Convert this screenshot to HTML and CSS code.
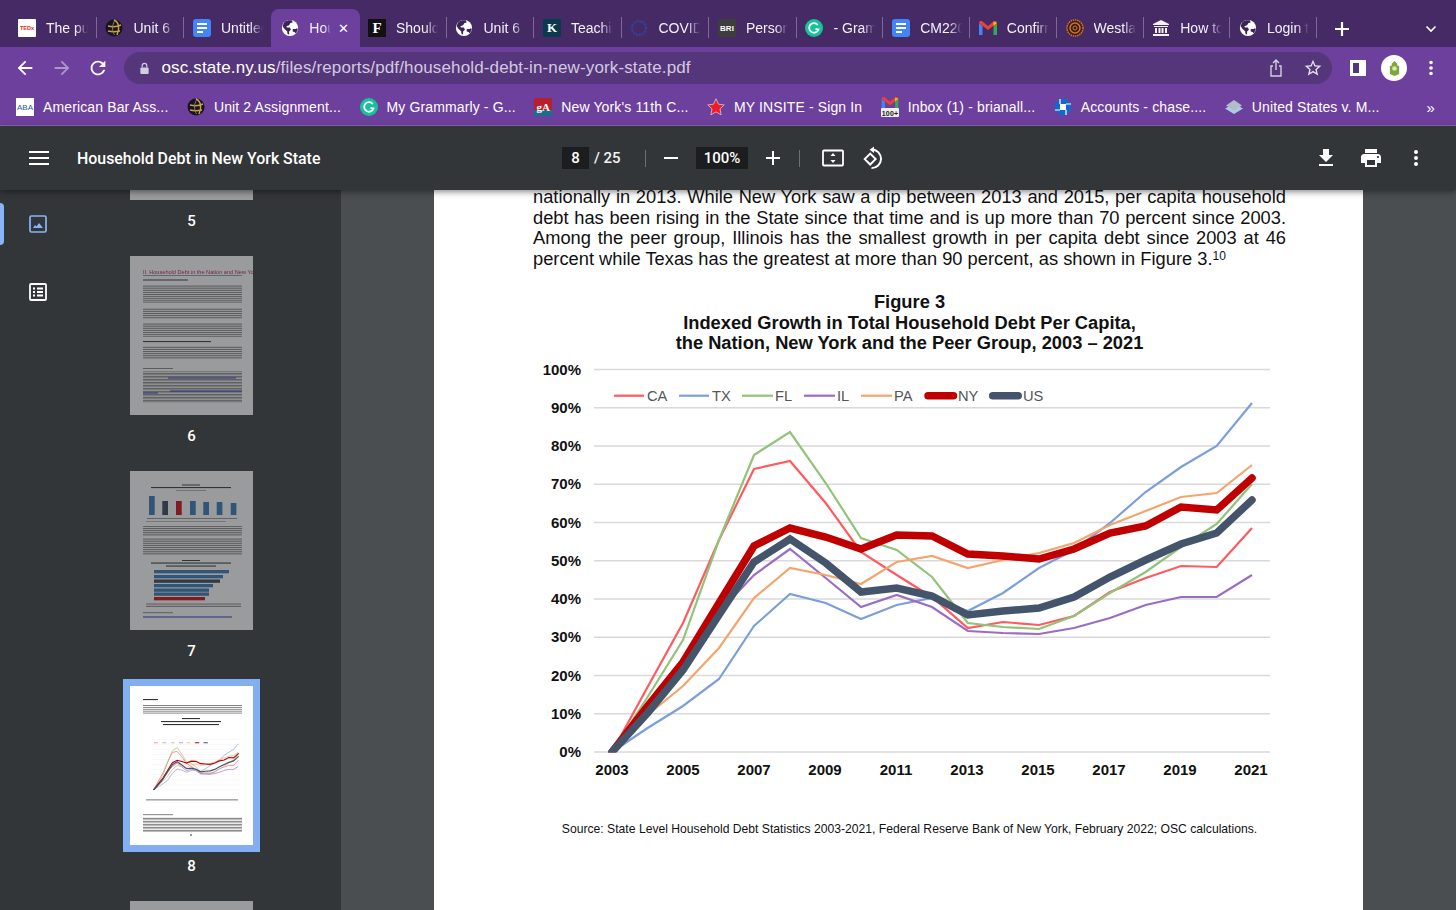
FILE: index.html
```html
<!DOCTYPE html>
<html lang="en">
<head>
<meta charset="utf-8">
<title>Household Debt in New York State</title>
<link rel="stylesheet" href="styles.css">
</head>
<body>
<svg class="defs" aria-hidden="true">
  <defs>
    <pattern id="ln" width="3" height="1.9" patternUnits="userSpaceOnUse"><rect width="3" height=".7" fill="#555"/></pattern>
    <pattern id="lnf" width="4" height="1.5" patternUnits="userSpaceOnUse"><rect width="4" height=".6" fill="#555"/></pattern>
    <clipPath id="plot-clip"><rect x="590" y="360" width="700" height="392.500"/></clipPath>
    <symbol id="globe" viewBox="0 0 20 20"><circle cx="10" cy="10" r="9" fill="#fff"/><path fill="#3d2458" d="M8 1.500 4 3 1.800 7.500 3 10l4 4v2l2 1.500V14l2-2-1-2.500H6.500L6 8l3-1 1.500-2.500L13 4l-1-2.500zM13 11h3.500l1.500-1 .5 2-2 4-1.500-1.500L13 14z"/></symbol>
    <symbol id="docs" viewBox="0 0 18 18"><rect width="18" height="18" rx="3" fill="#4285f4"/><path d="M4 5h10M4 9h10M4 13h6" stroke="#fff" stroke-width="2"/></symbol>
    <symbol id="shield" viewBox="0 0 18 18"><circle cx="9" cy="9" r="8.500" fill="#17131f"/><path d="M9 1c5 2 6 9 3 15M3 7c4 1 9 1 13-1M3 12c4 1 7 1 12 0" stroke="#c9a24a" stroke-width="1.500" fill="none"/><path d="M9.500 2C7 6 7 12 9.500 16" stroke="#8c8062" stroke-width="1" fill="none"/></symbol>
    <symbol id="gram" viewBox="0 0 18 18"><circle cx="9" cy="9" r="9" fill="#15c39a"/><path d="M12.800 6A4.800 4.800 0 1 0 13.500 10.500L10.500 10" fill="none" stroke="#fff" stroke-width="1.800"/></symbol>
    <symbol id="gmail" viewBox="0 0 18 14"><path fill="#4285f4" d="M0 2v12h3.500V5z"/><path fill="#34a853" d="M14.500 5v9H18V2z"/><path fill="#ea4335" d="M0 2 9 9l9-7c0-2-2-2.500-3.500-1.500L9 5 3.500.5C2 -.5 0 0 0 2z"/><path fill="#fbbc04" d="M14.500 .5 18 2l-3.500 3z"/></symbol>
  </defs>
</svg>

<header class="chrome">
  <div class="tabstrip">
    <div class="tab"><span class="fav ted">TEDx</span><span class="tab-title">The public</span></div>
    <div class="tab"><svg class="fav"><use href="#shield"/></svg><span class="tab-title">Unit 6 Test</span></div>
    <div class="tab tab-nosep"><svg class="fav"><use href="#docs"/></svg><span class="tab-title">Untitled</span></div>
    <div class="tab tab-active"><svg class="fav"><use href="#globe"/></svg><span class="tab-title tab-title-short">Household</span><span class="tab-close">✕</span></div>
    <div class="tab"><span class="fav fav-f">F</span><span class="tab-title">Should</span></div>
    <div class="tab"><svg class="fav"><use href="#globe"/></svg><span class="tab-title">Unit 6 Test</span></div>
    <div class="tab"><span class="fav fav-k">K</span><span class="tab-title">Teaching</span></div>
    <div class="tab"><svg class="fav" viewBox="0 0 18 18"><circle cx="9" cy="9" r="7" fill="none" stroke="#3a3f8f" stroke-width="2.500" stroke-dasharray="2 1"/></svg><span class="tab-title">COVID-19</span></div>
    <div class="tab"><span class="fav fav-bri">BRI</span><span class="tab-title">Personal</span></div>
    <div class="tab tab-narrow"><svg class="fav"><use href="#gram"/></svg><span class="tab-title">- Grammarly</span></div>
    <div class="tab tab-narrow"><svg class="fav"><use href="#docs"/></svg><span class="tab-title">CM220</span></div>
    <div class="tab tab-narrow"><svg class="fav" viewBox="0 0 18 14"><use href="#gmail"/></svg><span class="tab-title">Confirm</span></div>
    <div class="tab tab-narrow"><svg class="fav" viewBox="0 0 18 18"><circle cx="9" cy="9" r="8" fill="#3a2016" stroke="#d3702c" stroke-width="1.500" stroke-dasharray="1.500 .7"/><circle cx="9" cy="9" r="5" fill="none" stroke="#d3702c" stroke-width="1.500"/><circle cx="9" cy="9" r="2" fill="none" stroke="#d3702c"/></svg><span class="tab-title">Westlaw</span></div>
    <div class="tab tab-narrow"><svg class="fav" viewBox="0 0 18 18"><path fill="#f2f2f2" d="M9 1 17 5v1H1V5zM2 7h14v1H2zM3 9h2v5H3zM6.500 9h2v5h-2zM9.500 9h2v5h-2zM13 9h2v5h-2zM1 15h16v2H1z"/></svg><span class="tab-title">How to</span></div>
    <div class="tab tab-narrow"><svg class="fav"><use href="#globe"/></svg><span class="tab-title">Login to</span></div>
    <button class="strip-btn strip-plus"><svg viewBox="0 0 16 16"><path d="M8 1v14M1 8h14" stroke="#fff" stroke-width="2.200"/></svg></button>
    <button class="strip-btn strip-chev"><svg viewBox="0 0 12 8"><path d="M1.500 1.500 6 6l4.500-4.500" fill="none" stroke="#fff" stroke-width="1.600"/></svg></button>
  </div>

  <div class="toolbar">
    <button class="tb"><svg viewBox="0 0 24 24"><path fill="#fff" d="M20 11H7.830l5.590-5.590L12 4l-8 8 8 8 1.410-1.410L7.830 13H20v-2z"/></svg></button>
    <button class="tb tb-dim"><svg viewBox="0 0 24 24"><path fill="#fff" d="M4 11h12.170l-5.590-5.590L12 4l8 8-8 8-1.410-1.410L16.170 13H4v-2z"/></svg></button>
    <button class="tb"><svg viewBox="0 0 24 24"><path fill="#fff" d="M17.650 6.350A7.958 7.958 0 0 0 12 4c-4.420 0-7.990 3.580-7.990 8s3.570 8 7.990 8c3.730 0 6.840-2.550 7.730-6h-2.080A5.990 5.990 0 0 1 12 18c-3.310 0-6-2.690-6-6s2.690-6 6-6c1.660 0 3.140.69 4.220 1.780L13 11h7V4l-2.350 2.350z"/></svg></button>
    <div class="omnibox">
      <svg class="lock" viewBox="0 0 12 14"><path d="M3.500 6V4a2.500 2.500 0 0 1 5 0v2" fill="none" stroke="#d5cde2" stroke-width="1.300"/><rect x="1.500" y="6" width="9" height="7" rx="1" fill="#d5cde2"/></svg>
      <span class="url"><b>osc.state.ny.us</b>/files/reports/pdf/household-debt-in-new-york-state.pdf</span>
      <svg class="omni-ic" viewBox="0 0 20 20"><path d="M10 12V2M7 5l3-3 3 3M7 8H5v10h10V8h-2" fill="none" stroke="#d5cde2" stroke-width="1.400"/></svg>
      <svg class="omni-ic" viewBox="0 0 24 24"><path fill="#e6e0ee" d="M22 9.240l-7.190-.62L12 2 9.190 8.630 2 9.240l5.460 4.730L5.820 21 12 17.270 18.180 21l-1.630-7.030L22 9.240zM12 15.400l-3.760 2.270 1-4.280-3.320-2.880 4.380-.38L12 6.100l1.710 4.040 4.380.38-3.320 2.880 1 4.280L12 15.400z"/></svg>
    </div>
    <button class="tb tb-first"><svg viewBox="0 0 18 18"><rect x="1" y="1" width="16" height="16" fill="#fff"/><rect x="4" y="4" width="6" height="10" fill="#55367b"/></svg></button>
    <button class="tb"><span class="avatar"><svg viewBox="0 0 14 18"><path fill="#7fa53d" d="M7 1 10 4v2h2v9l-5 2-5-2V6h2V4z"/><circle cx="7" cy="9" r="2.500" fill="#dce8a8"/></svg></span></button>
    <button class="tb"><svg viewBox="0 0 24 24"><path fill="#fff" d="M12 8a2 2 0 1 0 0-4 2 2 0 0 0 0 4zm0 2a2 2 0 1 0 0 4 2 2 0 0 0 0-4zm0 6a2 2 0 1 0 0 4 2 2 0 0 0 0-4z"/></svg></button>
  </div>

  <nav class="bookmarks">
    <a class="bm"><span class="bm-ic aba">ABA</span>American Bar Ass...</a>
    <a class="bm"><svg class="bm-ic"><use href="#shield"/></svg>Unit 2 Assignment...</a>
    <a class="bm"><svg class="bm-ic"><use href="#gram"/></svg>My Grammarly - G...</a>
    <a class="bm"><span class="bm-ic ga">gA</span>New York's 11th C...</a>
    <a class="bm"><svg class="bm-ic" viewBox="0 0 24 24"><path fill="#ef1c24" stroke="#c9b9d6" stroke-width="1.200" d="M12 1l3.300 7.300 7.700.9-5.700 5.300 1.500 7.900L12 18.500l-6.800 3.900 1.500-7.900L1 9.200l7.700-.9z"/></svg>MY INSITE - Sign In</a>
    <a class="bm"><svg class="bm-ic bm-ic-tall" viewBox="0 0 18 21"><use href="#gmail" width="18" height="13"/><rect y="11" width="18" height="9" rx="1" fill="#eee"/><text x="9" y="18.500" class="t100">100+</text></svg>Inbox (1) - brianall...</a>
    <a class="bm"><svg class="bm-ic" viewBox="0 0 18 18"><path fill="#1169c9" d="M6 1h6l5 5v6l-5 5H6l-5-5V6z"/><path fill="#fff" d="M6 6h6v6H6z"/><path stroke="#fff" stroke-width="1.200" d="M6 6 6 1M12 6h5M12 12v5M6 12H1"/></svg>Accounts - chase....</a>
    <a class="bm"><svg class="bm-ic" viewBox="0 0 18 18"><path fill="#a9cde8" d="M9 6 18 10.500 9 16 0 10.500z"/><path fill="#b3bcc6" d="M9 2 17 7.500 9 12.500 1 7.500z"/></svg>United States v. M...</a>
    <span class="bm-more">»</span>
  </nav>
</header>

<section class="pdfbar">
  <button class="pb pb-menu"><svg viewBox="0 0 20 14"><path d="M0 1h20M0 7h20M0 13h20" stroke="#fff" stroke-width="2"/></svg></button>
  <h1 class="doc-title">Household Debt in New York State</h1>
  <span class="num-box">8</span>
  <span class="pages">/ 25</span>
  <i class="vsep vsep-a"></i>
  <button class="pb pb-minus"><svg viewBox="0 0 16 16"><path d="M1 8h14" stroke="#fff" stroke-width="2"/></svg></button>
  <span class="zoom-box">100%</span>
  <button class="pb pb-plus"><svg viewBox="0 0 16 16"><path d="M1 8h14M8 1v14" stroke="#fff" stroke-width="2"/></svg></button>
  <i class="vsep vsep-b"></i>
  <button class="pb pb-fit"><svg viewBox="0 0 22 18"><rect x="1" y="1.500" width="20" height="15" rx="1" fill="none" stroke="#fff" stroke-width="1.800"/><path fill="#fff" d="M11 4l2.500 3h-5zM11 14l2.500-3h-5z"/></svg></button>
  <button class="pb pb-rot"><svg viewBox="0 0 22 22"><path d="M8 3.500a8.500 8.500 0 1 1 2 17" fill="none" stroke="#fff" stroke-width="1.800" transform="rotate(8 11 11)"/><path fill="#fff" d="M11 .5v6l-4-3z"/><path d="M7.500 7 2.500 12l5 5 5-5z" fill="none" stroke="#fff" stroke-width="1.800"/></svg></button>
  <button class="pb pb-r1"><svg viewBox="0 0 24 24"><path fill="#fff" d="M19 9h-4V3H9v6H5l7 7 7-7zM5 18v2h14v-2H5z"/></svg></button>
  <button class="pb pb-r"><svg viewBox="0 0 24 24"><path fill="#fff" d="M19 8H5c-1.660 0-3 1.340-3 3v6h4v4h12v-4h4v-6c0-1.660-1.340-3-3-3zm-3 11H8v-5h8v5zm3-7c-.55 0-1-.45-1-1s.45-1 1-1 1 .45 1 1-.45 1-1 1zm-1-9H6v4h12V3z"/></svg></button>
  <button class="pb pb-r"><svg viewBox="0 0 24 24"><path fill="#fff" d="M12 8a2 2 0 1 0 0-4 2 2 0 0 0 0 4zm0 2a2 2 0 1 0 0 4 2 2 0 0 0 0-4zm0 6a2 2 0 1 0 0 4 2 2 0 0 0 0-4z"/></svg></button>
</section>

<main class="workspace">
  <aside class="sidebar">
    <div class="rail">
      <button class="rail-btn rail-on"><svg viewBox="0 0 18 18"><rect x="1" y="1" width="16" height="16" rx="1.500" fill="none" stroke="#8ab4f8" stroke-width="1.700"/><path fill="#8ab4f8" d="M4 13l2-3 1.500 1.500L10 8l4 5z"/></svg></button>
      <button class="rail-btn"><svg viewBox="0 0 18 18"><rect x="1" y="1" width="16" height="16" rx="1" fill="none" stroke="#fff" stroke-width="1.800"/><path d="M4 5.500h2M8 5.500h6M4 9h2M8 9h6M4 12.500h2M8 12.500h6" stroke="#fff" stroke-width="1.800"/></svg></button>
    </div>
    <div class="thumbs">
      <figure class="thumb">
        <svg class="thumb-page dim" viewBox="0 0 123 159"><rect width="123" height="159" fill="#fff"/></svg>
        <figcaption>5</figcaption>
      </figure>
      <figure class="thumb">
        <svg class="thumb-page dim" viewBox="0 0 123 159">
          <rect width="123" height="159" fill="#fff"/>
          <text x="13" y="17.500" class="t6h">II. Household Debt in the Nation and New York</text>
          <rect x="13" y="19" width="99" height=".7" fill="#4e6e9c"/>
          <rect x="13" y="23.500" width="45" height="1" fill="#333"/>
          <rect x="13" y="29" width="99" height="18" fill="url(#ln)"/>
          <rect x="13" y="52" width="99" height="11" fill="url(#ln)"/>
          <rect x="13" y="67" width="99" height="14" fill="url(#ln)"/>
          <rect x="13" y="85" width="68" height="1.100" fill="#333"/>
          <rect x="13" y="90" width="99" height="13" fill="url(#ln)"/>
          <rect x="13" y="112" width="30" height=".6" fill="#333"/>
          <rect x="13" y="115" width="99" height="32" fill="url(#lnf)"/>
          <rect x="38" y="121.500" width="68" height="1" fill="#1c2cc8"/>
          <rect x="40" y="134.500" width="72" height="1" fill="#1c2cc8"/>
          <rect x="13" y="136.500" width="15" height="1" fill="#1c2cc8"/>
        </svg>
        <figcaption>6</figcaption>
      </figure>
      <figure class="thumb">
        <svg class="thumb-page dim" viewBox="0 0 123 159">
          <rect width="123" height="159" fill="#fff"/>
          <rect x="52" y="13.500" width="18" height="1" fill="#333"/>
          <rect x="21" y="16" width="80" height="1.100" fill="#333"/>
          <rect x="46" y="19" width="30" height=".6" fill="#777"/>
          <g fill="#2e74b5"><rect x="19" y="25" width="5.700" height="19"/><rect x="60" y="30" width="5.700" height="14"/><rect x="73.300" y="31" width="5.700" height="13"/><rect x="86.700" y="31" width="5.700" height="13"/><rect x="100.700" y="32" width="5.700" height="12"/></g>
          <rect x="32.300" y="30" width="5.700" height="14" fill="#2f3f58"/>
          <rect x="46" y="30" width="5.700" height="14" fill="#d0000c"/>
          <rect x="17" y="47" width="90" height=".8" fill="#777"/>
          <rect x="16" y="50" width="80" height=".6" fill="#888"/>
          <rect x="13" y="55" width="99" height="10" fill="url(#ln)"/>
          <rect x="13" y="67" width="99" height="17" fill="url(#ln)"/>
          <rect x="52" y="89" width="18" height="1" fill="#333"/>
          <rect x="21" y="91.500" width="80" height="1.100" fill="#333"/>
          <rect x="36" y="94.500" width="50" height="1.100" fill="#333"/>
          <g fill="#2e74b5"><rect x="24" y="99" width="75" height="3.300"/><rect x="24" y="104" width="69" height="3.300"/><rect x="24" y="113" width="59" height="3.300"/><rect x="24" y="117.500" width="55" height="3.300"/><rect x="24" y="121.500" width="55" height="3.300"/></g>
          <rect x="24" y="108.500" width="66" height="3.300" fill="#2f3f58"/>
          <rect x="24" y="126" width="51" height="3.300" fill="#d0000c"/>
          <rect x="16" y="132.500" width="95" height="3.500" fill="url(#lnf)"/>
          <rect x="13" y="141.500" width="30" height=".6" fill="#333"/>
          <rect x="13" y="145.500" width="89" height="1" fill="#1c2cc8"/>
        </svg>
        <figcaption>7</figcaption>
      </figure>
      <figure class="thumb">
        <svg class="thumb-page selected" viewBox="0 0 123 159">
          <rect width="123" height="159" fill="#fff"/>
          <rect x="13" y="13" width="15" height="1.100" fill="#333"/>
          <rect x="13" y="19" width="99" height="9" fill="url(#ln)"/>
          <rect x="52" y="32" width="18" height="1.100" fill="#333"/>
          <rect x="31" y="35" width="60" height="1.100" fill="#333"/>
          <rect x="33" y="38" width="56" height="1.100" fill="#333"/>
          <g class="mini-chart" transform="scale(.1324) translate(-434 33)"><use href="#chart-grid"/><use href="#chart-legend"/><use href="#chart-lines"/></g>
          <rect x="16" y="113.500" width="92" height=".8" fill="#555"/>
          <rect x="13" y="128.500" width="30" height=".6" fill="#333"/>
          <rect x="13" y="131" width="99" height="15" fill="url(#lnf)"/>
          <rect x="60" y="148.500" width="2" height="1" fill="#333"/>
        </svg>
        <figcaption>8</figcaption>
      </figure>
      <figure class="thumb">
        <svg class="thumb-page dim" viewBox="0 0 123 159"><rect width="123" height="159" fill="#fff"/></svg>
      </figure>
    </div>
  </aside>

  <div class="viewer">
    <article class="page">
      <p class="para">
        <span>nationally in 2013. While New York saw a dip between 2013 and 2015, per capita household</span>
        <span>debt has been rising in the State since that time and is up more than 70 percent since 2003.</span>
        <span>Among the peer group, Illinois has the smallest growth in per capita debt since 2003 at 46</span>
        <span class="para-last">percent while Texas has the greatest at more than 90 percent, as shown in Figure 3.<sup>10</sup></span>
      </p>
      <h2 class="fig-title">Figure 3<br>Indexed Growth in Total Household Debt Per Capita,<br>the Nation, New York and the Peer Group, 2003 – 2021</h2>
      <svg class="chart" viewBox="533 360 753 430" width="753" height="430">
        <g id="chart-grid" stroke="#d9d9d9" stroke-width="1.500">
          <path d="M594 369.500H1270M594 407.800H1270M594 446H1270M594 484.300H1270M594 522.500H1270M594 560.800H1270M594 599H1270M594 637.300H1270M594 675.500H1270M594 713.800H1270M594 752H1270"/>
        </g>
        <g class="axis-y">
          <text x="581" y="375">100%</text><text x="581" y="413">90%</text><text x="581" y="451">80%</text><text x="581" y="489">70%</text><text x="581" y="528">60%</text><text x="581" y="566">50%</text><text x="581" y="604">40%</text><text x="581" y="642">30%</text><text x="581" y="681">20%</text><text x="581" y="719">10%</text><text x="581" y="757">0%</text>
        </g>
        <g class="axis-x">
          <text x="612" y="775">2003</text><text x="683" y="775">2005</text><text x="754" y="775">2007</text><text x="825" y="775">2009</text><text x="896" y="775">2011</text><text x="967" y="775">2013</text><text x="1038" y="775">2015</text><text x="1109" y="775">2017</text><text x="1180" y="775">2019</text><text x="1251" y="775">2021</text>
        </g>
        <g id="chart-legend" fill="none">
          <path d="M614 395.700h30" class="s-ca"/><path d="M679 395.700h30" class="s-tx"/><path d="M742 395.700h31" class="s-fl"/><path d="M804 395.700h31" class="s-il"/><path d="M861 395.700h31" class="s-pa"/><path d="M928 395.700h25.500" class="s-ny"/><path d="M992.700 395.700h25.500" class="s-us"/>
        </g>
        <g class="legend">
          <text x="647" y="401">CA</text><text x="712" y="401">TX</text><text x="775" y="401">FL</text><text x="837" y="401">IL</text><text x="894" y="401">PA</text><text x="958" y="401">NY</text><text x="1023" y="401">US</text>
        </g>
        <g id="chart-lines" fill="none" stroke-linejoin="miter" clip-path="url(#plot-clip)">
          <polyline class="s-ca" points="612,752 647.600,687 683,623 719,540 754,469 790,461 825.700,503 861,552 896.700,575 932,597 967.800,628 1003,622 1039,625 1074,616 1110,592 1145.600,578 1181,566 1216.700,567 1252,528"/>
          <polyline class="s-tx" points="612,752 647.600,728 683,706 719,679 754,626 790,594 825.700,603 861,619 896.700,605 932,598 967.800,611 1003,593 1039,568 1074,550 1110,523 1145.600,492 1181,467 1216.700,446 1252,403"/>
          <polyline class="s-fl" points="612,752 647.600,697 683,640 719,540 754,455 790,432 825.700,483 861,538 896.700,550 932,577 967.800,623 1003,627 1039,629 1074,616 1110,593 1145.600,572 1181,547 1216.700,524 1252,484"/>
          <polyline class="s-il" points="612,752 647.600,712 683,667 719,612 754,575 790,549 825.700,578 861,607 896.700,595 932,607 967.800,631 1003,633 1039,634 1074,628 1110,618 1145.600,605 1181,597 1216.700,597 1252,575"/>
          <polyline class="s-pa" points="612,752 647.600,715 683,686 719,648 754,598 790,568 825.700,575 861,584 896.700,562 932,556 967.800,568 1003,560 1039,553 1074,543 1110,525 1145.600,511 1181,497 1216.700,493 1252,465"/>
          <polyline class="s-ny" points="612,752 647.600,706 683,662 719,603 754,546 790,528 825.700,537 861,549 896.700,535 932,536 967.800,554 1003,556 1039,559 1074,549 1110,533 1145.600,526 1181,507 1216.700,510 1252,478"/>
          <polyline class="s-us" points="612,752 647.600,713 683,670 719,615 754,562 790,539 825.700,563 861,592 896.700,588 932,596 967.800,615 1003,611 1039,608 1074,597 1110,577 1145.600,560 1181,544 1216.700,533 1252,500"/>
        </g>
      </svg>
      <p class="source">Source: State Level Household Debt Statistics 2003-2021, Federal Reserve Bank of New York, February 2022; OSC calculations.</p>
    </article>
  </div>
</main>
</body>
</html>
```
FILE: styles.css
```css
* { box-sizing: border-box; }
html, body { margin: 0; height: 100%; overflow: hidden; }
body {
  width: 1456px;
  height: 910px;
  display: flex;
  flex-direction: column;
  background: #333639;
  font-family: "Liberation Sans", Arial, sans-serif;
  color: #fff;
}
button { background: none; border: 0; padding: 0; display: flex; align-items: center; justify-content: center; color: inherit; }
svg { display: block; }
.defs { position: absolute; width: 0; height: 0; }

/* Browser chrome */
.chrome { flex: none; background: #6e409e; border-bottom: 1px solid #8d68b6; }
.tabstrip { height: 47px; background: #452a66; display: flex; align-items: flex-end; padding-left: 9.300px; }
.tab { width: 87.500px; height: 38px; display: flex; align-items: center; padding-left: 8.700px; position: relative; flex: none; }
.tab-narrow { width: 86.700px; }
.tab::after { content: ""; position: absolute; right: 0; top: 8px; height: 21px; width: 1px; background: #7d6795; }
.tab-nosep::after, .tab-active::after { display: none; }
.tab-active { background: #6e409e; border-radius: 8px 8px 0 0; width: 89.500px; margin-left: -1px; margin-right: -1px; padding-left: 10.500px; z-index: 1; }
.fav { width: 18px; height: 18px; flex: none; }
.tab-title {
  width: 42px;
  margin-left: 10px;
  font-size: 14px;
  white-space: nowrap;
  overflow: hidden;
  color: #f5f0fa;
  -webkit-mask-image: linear-gradient(90deg, #000 70%, transparent 100%);
  mask-image: linear-gradient(90deg, #000 70%, transparent 100%);
}
.tab-title-short { width: 22px; }
.tab-close { margin-left: 7px; font-size: 13px; color: #fff; }
.ted { background: #fff; color: #e62b1e; font-size: 5.500px; font-weight: 700; display: flex; align-items: center; justify-content: center; border-radius: 1px; }
.fav-f { background: #111; color: #fff; font: 700 15px "Liberation Serif", serif; display: flex; align-items: center; justify-content: center; }
.fav-k { background: #0c3a4d; color: #fff; font: 700 13px "Liberation Serif", serif; display: flex; align-items: center; justify-content: center; }
.fav-bri { background: #3d3d3d; color: #fff; font-size: 8px; font-weight: 700; display: flex; align-items: center; justify-content: center; }
.strip-btn { flex: none; }
.strip-plus { width: 16px; height: 16px; margin-left: 17px; margin-bottom: 10px; }
.strip-chev { width: 12px; height: 8px; margin-left: 75px; margin-bottom: 14px; }

.toolbar { height: 40px; display: flex; align-items: center; padding: 2px 7px 0; }
.tb { width: 36.500px; height: 32px; flex: none; }
.tb svg { width: 22px; height: 22px; }
.tb-dim { opacity: .45; }
.tb-first { margin-left: 8px; }
.tb-first svg { width: 18px; height: 18px; }
.avatar { width: 26px; height: 26px; border-radius: 50%; background: #fff; display: flex; align-items: center; justify-content: center; }
.avatar svg { width: 13px; height: 17px; }
.omnibox { flex: 1; height: 32px; margin-left: 7px; background: #55367b; border-radius: 16px; display: flex; align-items: center; padding: 0 9px 0 15px; }
.lock { width: 11px; height: 13px; flex: none; }
.url { flex: 1; margin-left: 12px; font-size: 17px; letter-spacing: .14px; color: #d3c9e0; white-space: nowrap; overflow: hidden; }
.url b { font-weight: 400; color: #fff; }
.omni-ic { width: 20px; height: 20px; margin-left: 17px; flex: none; }

.bookmarks { height: 38px; display: flex; align-items: center; padding: 2px 0 0 16px; gap: 18.500px; font-size: 14px; letter-spacing: .13px; }
.bm { display: flex; align-items: center; gap: 9px; white-space: nowrap; color: #fff; }
.bm-ic { width: 18px; height: 18px; flex: none; }
.bm-ic-tall { height: 21px; }
.aba { background: #fff; color: #1b5da8; font-size: 8px; font-weight: 400; letter-spacing: 0; display: flex; align-items: center; justify-content: center; }
.ga { background: linear-gradient(#b5202e 65%, #1f6d8c 65%); color: #fff; font: 700 11px "Liberation Serif", serif; display: flex; align-items: center; justify-content: center; }
.t100 { font: 700 7px "Liberation Sans", sans-serif; fill: #222; text-anchor: middle; }
.bm-more { margin-left: auto; margin-right: 21px; font-size: 15px; }

/* PDF toolbar */
.pdfbar { flex: none; height: 64px; background: #333639; display: flex; align-items: center; padding-left: 29px; position: relative; z-index: 2; box-shadow: 0 2px 6px rgba(0,0,0,.45); }
.pb { flex: none; }
.pb-menu { width: 20px; height: 14px; }
.pb svg { width: 100%; height: 100%; }
.doc-title { margin: 0 0 0 28px; width: 485px; font: 500 15.900px Roboto, sans-serif; white-space: nowrap; }
.num-box, .zoom-box { background: #1b1d1f; height: 22px; display: flex; align-items: center; justify-content: center; font: 500 15px Roboto, sans-serif; }
.num-box { width: 27px; }
.pages { margin-left: 5px; font: 500 15px Roboto, sans-serif; color: #f1f3f4; width: 28px; white-space: nowrap; }
.vsep { width: 1px; height: 17px; background: #6d7073; flex: none; }
.vsep-a { margin-left: 23px; }
.vsep-b { margin-left: 18px; }
.pb-minus, .pb-plus { width: 16px; height: 16px; }
.pb-minus { margin-left: 17px; }
.zoom-box { width: 52px; margin-left: 17px; }
.pb-plus { margin-left: 17px; }
.pb-fit { width: 22px; height: 18px; margin-left: 22px; }
.pb-rot { width: 24px; height: 24px; margin-left: 18px; }
.pb-r1 { width: 24px; height: 24px; margin-left: 428px; }
.pb-r { width: 24px; height: 24px; margin-left: 21px; }

/* Workspace */
.workspace { flex: 1; min-height: 0; display: flex; overflow: hidden; }
.sidebar { width: 341px; flex: none; background: #333639; display: flex; overflow: hidden; }
.rail { width: 76px; flex: none; padding-top: 13px; display: flex; flex-direction: column; gap: 26px; }
.rail-btn { height: 42px; width: 76px; position: relative; }
.rail-btn svg { width: 18px; height: 18px; margin-left: -1px; }
.rail-on::before { content: ""; position: absolute; left: 0; top: 0; width: 4px; height: 42px; background: #8ab4f8; border-radius: 0 4px 4px 0; }
.thumbs { width: 231px; flex: none; margin-top: -149.300px; }
.thumb { margin: 0 0 25px; display: flex; flex-direction: column; align-items: center; }
.thumb-page { width: 123px; height: 159px; flex: none; }
.dim { opacity: .5; }
.selected { box-shadow: 0 0 0 7px #82aef2; }
.thumb figcaption { margin-top: 11px; height: 20px; font: 500 15px/20px Roboto, sans-serif; }
.t6h { font: 5.600px "Liberation Sans", sans-serif; fill: #b5202e; }
.mini-chart { --thin: 5; --bold: 9; }

.viewer { flex: 1; min-width: 0; background: #4b4e51; padding-left: 93px; overflow: hidden; }
.page { width: 929px; height: 760px; background: #fff; color: #000; padding: 0 77px 0 99px; margin-top: -3px; }

.para { margin: 0; font: 18.300px/20.700px "Liberation Sans", Arial, sans-serif; color: #111; }
.para span { display: block; text-align: justify; text-align-last: justify; white-space: nowrap; }
.para .para-last { text-align-last: left; }
.para sup { font-size: 12px; line-height: 0; vertical-align: 5px; }
.fig-title { margin: 22px 0 0; font: 700 18.300px/20.800px "Liberation Sans", Arial, sans-serif; text-align: center; color: #111; }
.chart { margin-top: 5.500px; }
.axis-y text { font: 700 15px "Liberation Sans", Arial, sans-serif; text-anchor: end; fill: #111; }
.axis-x text { font: 700 15px "Liberation Sans", Arial, sans-serif; text-anchor: middle; fill: #111; }
.legend text { font: 14.700px "Liberation Sans", Arial, sans-serif; fill: #555; }
.s-ca { stroke: #ff5a5f; stroke-width: var(--thin, 2.200); }
.s-tx { stroke: #7d9fd9; stroke-width: var(--thin, 2.200); }
.s-fl { stroke: #93c27a; stroke-width: var(--thin, 2.200); }
.s-il { stroke: #9b6cc6; stroke-width: var(--thin, 2.200); }
.s-pa { stroke: #f4a56e; stroke-width: var(--thin, 2.200); }
.s-ny { stroke: #c00000; stroke-width: var(--bold, 7.500); stroke-linecap: round; }
.s-us { stroke: #44546a; stroke-width: var(--bold, 7.500); stroke-linecap: round; }
.source { margin: 32.500px 0 0; font-size: 12.160px; text-align: center; color: #111; }
```
